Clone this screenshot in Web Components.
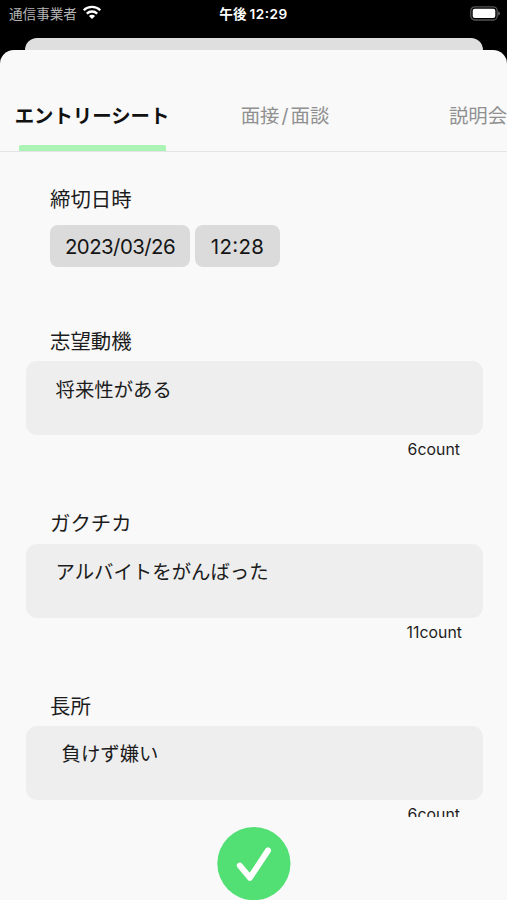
<!DOCTYPE html>
<html lang="ja">
<head>
<meta charset="utf-8">
<title>エントリーシート</title>
<style>
html, body { margin: 0; height: 900px; overflow: hidden; background: #000; }
body { font-family: Inter, "Noto Sans CJK JP", sans-serif; color: #1c1c1c; }
</style>
</head>
<body>
<entry-app></entry-app>
<script>
const define = (name, markup) => {
  const template = document.createElement('template');
  template.innerHTML = markup;
  customElements.define(name, class extends HTMLElement {
    constructor() {
      super();
      this.attachShadow({ mode: 'open' }).append(template.content.cloneNode(true));
    }
  });
};

define('status-bar', `
<style>
:host { display: grid; grid-template-columns: 1fr auto 1fr; align-items: center; height: 28px; margin-bottom: 10px; padding: 0 6px 0 9px; background: #000; color: #fff; box-sizing: border-box; font-size: 13.6px; line-height: 20px; white-space: nowrap; }
.carrier { display: flex; align-items: center; gap: 5px; color: #b5b5b5; }
.time { font-weight: 600; font-size: 13.6px; padding-right: 3px; font-feature-settings: "case"; }
.time span { margin-left: 3px; letter-spacing: .5px; }
.battery { justify-self: end; display: block; margin-top: -2px; }
.wifi { display: block; margin-top: -3px; }
</style>
<div class="carrier"><span>通信事業者</span>
<svg class="wifi" width="20" height="15" viewBox="0 0 20 15"><g fill="none" stroke="#fff" stroke-width="2.3"><path d="M1.7 5.3C6.3.8 13.7.8 18.3 5.3"/><path d="M4.8 8.6c2.9-2.8 7.5-2.8 10.4 0"/></g><path fill="#fff" d="M6.9 10.9c1.8-1.5 4.4-1.5 6.2 0L10 14z"/></svg></div>
<div class="time">午後<span>12:29</span></div>
<svg class="battery" width="31" height="15" viewBox="0 0 31 15"><rect x=".8" y=".8" width="26.4" height="13.2" rx="4" fill="none" stroke="#555" stroke-width="1.3"/><rect x="2.7" y="2.7" width="22.6" height="9.4" rx="2" fill="#fff"/><path fill="#777" d="M28.3 5.2c2.2 1 2.2 3.4 0 4.4z"/></svg>`);

define('tab-bar', `
<style>
:host { display: grid; grid-template-columns: 154px 89px 58px; justify-content: space-between; align-items: end; height: 102px; box-sizing: border-box; border-bottom: 1px solid #e4e4e4; padding-left: 15px; overflow: hidden; }
::slotted(:nth-child(2)) { margin-left: -48px; margin-right: 0; }
</style><slot></slot>`);

define('tab-item', `
<style>
:host { display: flex; flex-direction: column; align-items: center; gap: 14px; white-space: nowrap; color: #909090; font-size: 19.4px; line-height: 30px; }
:host([selected]) { color: #111; font-weight: 700; }
i { display: block; height: 6px; width: 100%; }
:host([selected]) i { width: 147px; background: #abf4b6; border-radius: 2px 2px 0 0; }
</style><span><slot></slot></span><i></i>`);

define('value-chip', `
<style>
:host { display: flex; align-items: center; justify-content: center; width: var(--w); height: 42px; border-radius: 8px; background: #dbdbdb; color: #151515; font-size: 20.4px; letter-spacing: var(--ls, 0); font-feature-settings: "case" var(--case, 0); }
</style><span><slot></slot></span>`);

define('deadline-row', `
<style>
:host { display: block; padding: 32px 0 0 50px; height: 141.7px; box-sizing: border-box; }
h2 { margin: 0; height: 32px; line-height: 32px; font-size: 20.4px; font-weight: 400; }
.row { display: flex; gap: 5px; margin-top: 9px; }
</style><h2>締切日時</h2><div class="row"><slot></slot></div>`);

define('answer-field', `
<style>
:host { display: block; height: 182.5px; }
h2 { margin: 0 0 0 50px; padding-top: 32px; height: 35.5px; line-height: 32px; font-size: 20.4px; font-weight: 400; }
.box { margin: 0 24.5px 0 25.5px; height: 74px; box-sizing: border-box; border-radius: 11px; background: #eeeeee; padding: var(--top, 13px) 0 0 var(--indent, 30px); font-size: 19.4px; line-height: 30px; }
.count { text-align: right; margin-right: var(--end, 47px); font-size: 15.8px; letter-spacing: .05px; line-height: 29px; }
</style>
<h2><slot name="label"></slot></h2>
<div class="box"><slot></slot></div>
<div class="count"><slot name="count"></slot></div>`);

define('confirm-button', `
<style>
:host { display: block; width: 74px; height: 73px; margin: 10px auto 0; }
svg { display: block; }
</style>
<svg width="74" height="73" viewBox="0 0 74 73"><circle cx="36.9" cy="36.6" r="36.6" fill="#52df73"/><path d="M22.8 38.9 33 51 51 23.8" transform="translate(0 -.3)" fill="none" stroke="#fff" stroke-width="6" stroke-linecap="round" stroke-linejoin="round"/></svg>`);

define('entry-app', `
<style>
:host { display: block; width: 507px; height: 900px; background: #000; overflow: hidden; }
.behind { height: 12px; margin: 0 24px 0 25px; border-radius: 12px 12px 0 0; background: #dfdfdf; }
.sheet { height: 850px; border-radius: 14px 14px 0 0; background: #f9f9f9; overflow: hidden; }
.form { height: 665px; overflow: hidden; }
.slash { margin: 0 2px; }
</style>
<status-bar></status-bar>
<div class="behind"></div>
<div class="sheet">
  <tab-bar><tab-item selected>エントリーシート</tab-item><tab-item>面接<span class="slash">/</span>面談</tab-item><tab-item>説明会</tab-item></tab-bar>
  <div class="form">
    <deadline-row><value-chip style="--w:140px;--ls:-.55px">2023/03/26</value-chip><value-chip style="--w:85px;--ls:.35px;--case:1">12:28</value-chip></deadline-row>
    <answer-field style="--top:13.7px"><span slot="label">志望動機</span>将来性がある<span slot="count">6count</span></answer-field>
    <answer-field style="--end:45px"><span slot="label">ガクチカ</span>アルバイトをがんばった<span slot="count">11count</span></answer-field>
    <answer-field style="--indent:36px"><span slot="label">長所</span>負けず嫌い<span slot="count">6count</span></answer-field>
  </div>
  <confirm-button></confirm-button>
</div>`);
</script>
</body>
</html>
